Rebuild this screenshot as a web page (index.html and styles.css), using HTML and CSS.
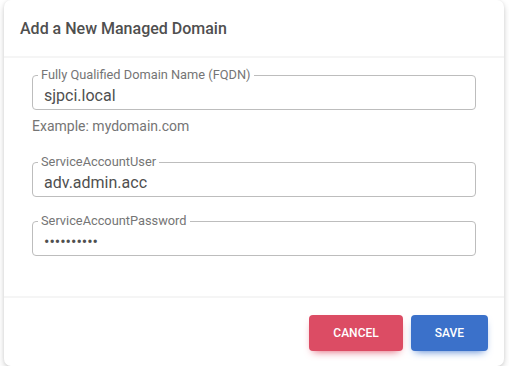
FILE: index.html
```html
<!DOCTYPE html>
<html lang="en">
<head>
    <meta charset="UTF-8" />
    <title>Add a New Managed Domain</title>
    <link rel="stylesheet" href="styles.css">
</head>
<body>

    <div class="modal">
        <div class="modal-header">
            <h5 class="modal-title">Add a New Managed Domain</h5>
        </div>

        <form class="modal-body" autocomplete="off">
            <div class="group group-fqdn">
                <fieldset class="field">
                    <legend>Fully Qualified Domain Name (FQDN)</legend>
                    <input type="text" name="fqdn" value="sjpci.local" />
                </fieldset>
                <div class="form-text">Example: mydomain.com</div>
            </div>

            <div class="group group-user">
                <fieldset class="field">
                    <legend>ServiceAccountUser</legend>
                    <input type="text" name="user" value="adv.admin.acc" />
                </fieldset>
            </div>

            <div class="group">
                <fieldset class="field">
                    <legend>ServiceAccountPassword</legend>
                    <input type="password" name="password" value="secretpass" />
                </fieldset>
            </div>
        </form>

        <div class="modal-footer">
            <button type="button" class="btn btn-danger">Cancel</button>
            <button type="submit" class="btn btn-primary">Save</button>
        </div>
    </div>

</body>
</html>
```

FILE: styles.css
```css
* {
    box-sizing: border-box;
}

body {
    margin: 0;
    background: #fff;
    font-family: Roboto, "Liberation Sans", sans-serif;
    color: #4f4f4f;
}

.modal {
    width: 500px;
    height: 366px;
    margin: 0 4px;
    background: #fff;
    border-radius: 7px;
    box-shadow: 0 3px 6px rgba(0, 0, 0, 0.18), 0 0 3px rgba(0, 0, 0, 0.06);
}

.modal-header {
    height: 58px;
    padding: 0 16px;
    display: flex;
    align-items: center;
    border-bottom: 2px solid #f5f5f5;
}

.modal-title {
    margin: 0;
    font-size: 16px;
    font-weight: 500;
    color: #4f4f4f;
}

.modal-body {
    height: 238px;
    padding: 10px 28px 0;
}

.group-fqdn {
    margin-bottom: 19px;
}

.group-user {
    margin-bottom: 17px;
}

.field {
    margin: 0;
    padding: 0 10px 3px 5px;
    border: 1px solid #bdbdbd;
    border-radius: 4px;
}

    .field legend {
        padding: 0 3px;
        font-size: 12.8px;
        line-height: 14px;
        color: #757575;
    }

    .field input {
        display: block;
        width: 100%;
        height: 22px;
        margin-top: 2px;
        padding: 0 0 0 6px;
        border: none;
        outline: none;
        background: transparent;
        font-family: Roboto, "Liberation Sans", sans-serif;
        font-size: 16px;
        color: #4f4f4f;
    }

.form-text {
    margin-top: 6px;
    font-size: 14px;
    line-height: 20px;
    color: #757575;
}

.modal-footer {
    height: 70px;
    padding: 17px 16px 0;
    display: flex;
    justify-content: flex-end;
    gap: 8px;
    border-top: 2px solid #f5f5f5;
}

.btn {
    height: 36px;
    padding: 0 24px;
    border: none;
    border-radius: 4px;
    font-family: Roboto, "Liberation Sans", sans-serif;
    font-size: 12px;
    font-weight: 500;
    text-transform: uppercase;
    color: #fff;
    cursor: pointer;
}

.btn-danger {
    background-color: #dc4c64;
    box-shadow: 0 4px 9px -4px #dc4c64;
}

.btn-primary {
    background-color: #3b71ca;
    box-shadow: 0 4px 9px -4px #3b71ca;
}
```
